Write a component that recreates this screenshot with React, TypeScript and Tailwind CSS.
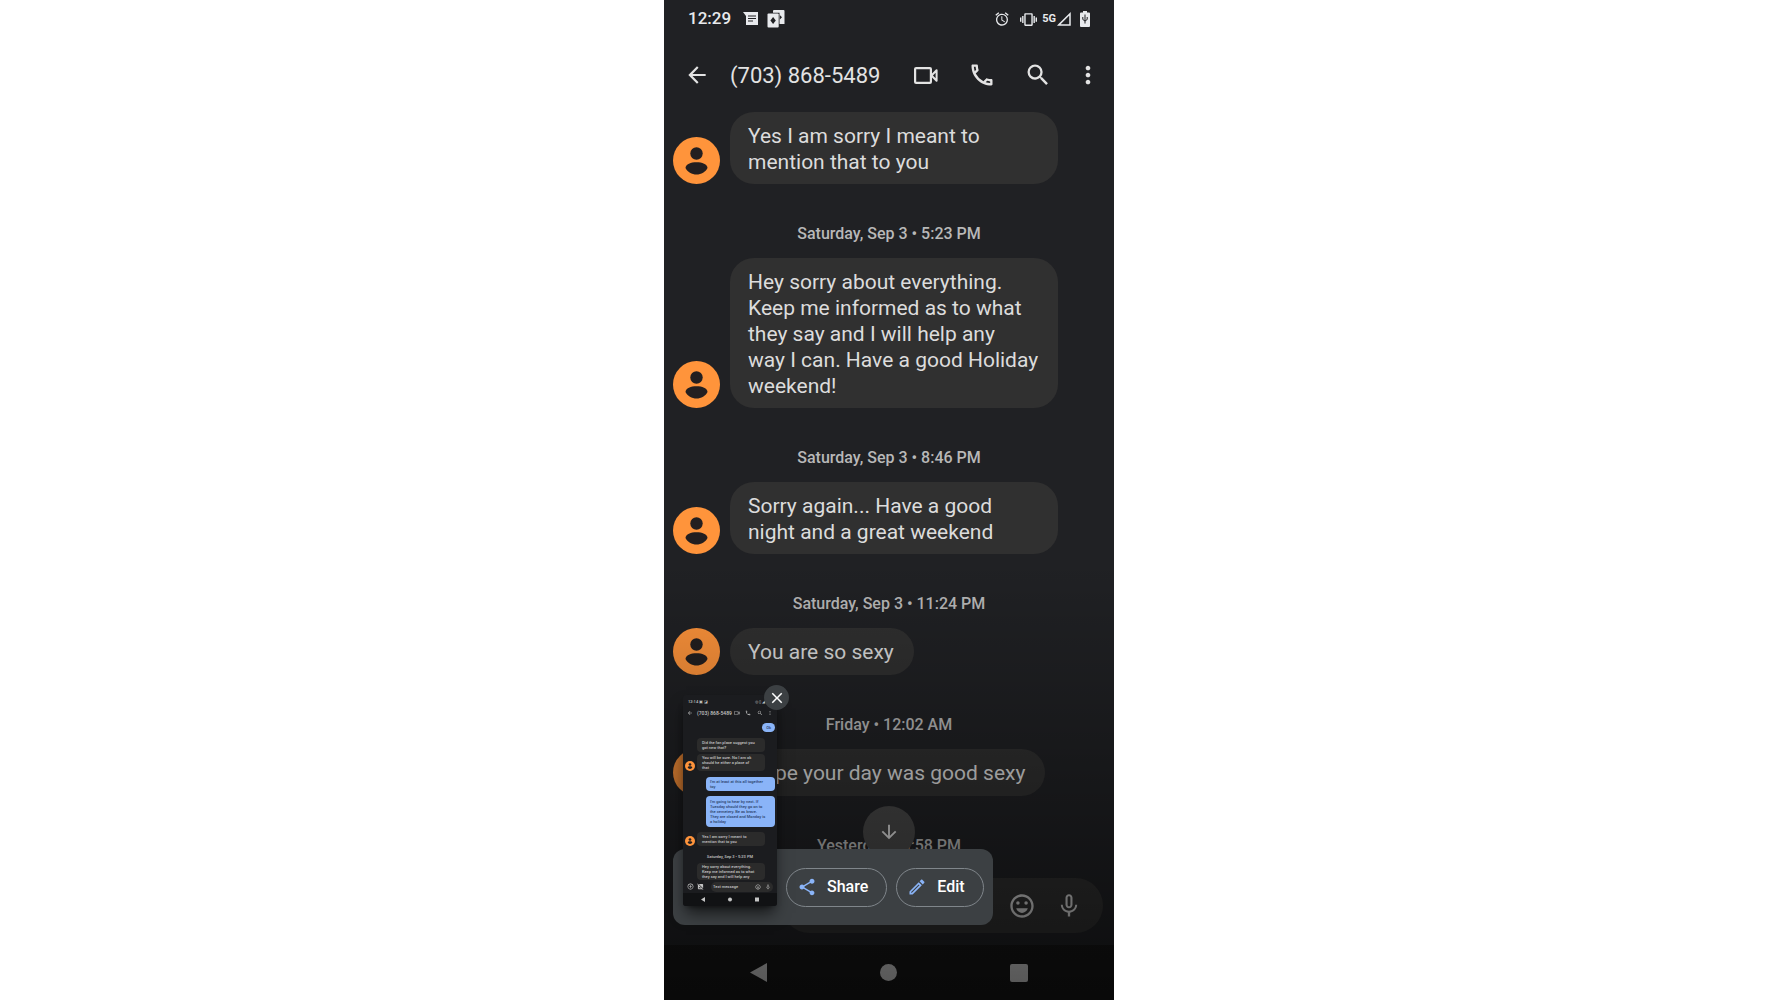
import type { ReactNode } from "react";
import {
  MdAlarm,
  MdArrowBack,
  MdArrowDownward,
  MdClose,
  MdImageNotSupported,
  MdMicNone,
  MdMoreVert,
  MdOutlineAddCircleOutline,
  MdOutlineCall,
  MdOutlineEdit,
  MdOutlineEmojiEmotions,
  MdSearch,
  MdShare,
  MdVibration,
} from "react-icons/md";

const messages = [
  { text: "Yes I am sorry I meant to\nmention that to you", time: "Saturday, Sep 3 • 5:23 PM", wide: true },
  {
    text: "Hey sorry about everything.\nKeep me informed as to what\nthey say and I will help any\nway I can. Have a good Holiday\nweekend!",
    time: "Saturday, Sep 3 • 8:46 PM",
    wide: true,
  },
  { text: "Sorry again... Have a good\nnight and a great weekend", time: "Saturday, Sep 3 • 11:24 PM", wide: true },
  { text: "You are so sexy", time: "Friday • 12:02 AM", wide: false },
  { text: "Hope your day was good sexy", time: "Yesterday • 6:58 PM", wide: false },
];

function VideoIcon({ className }: { className?: string }) {
  return (
    <svg viewBox="0 0 24 17" className={className} fill="none" stroke="currentColor" strokeWidth="2.2">
      <rect x="1.100" y="1.100" width="15.800" height="14.800" rx="1" />
      <path d="M17.500 8.500 22.600 3.200v10.600z" strokeWidth="2" strokeLinejoin="round" />
    </svg>
  );
}

function Avatar({ className }: { className: string }) {
  return (
    <svg viewBox="0 0 47 47" className={className} aria-hidden="true">
      <circle cx="23.5" cy="23.5" r="23.5" fill="#ff943b" />
      <circle cx="23.5" cy="16.5" r="6.200" fill="#231f20" />
      <path d="M12.500 31c0-3.800 5.500-5.800 11-5.800s11 2 11 5.800c-2 4-6.200 6.500-11 6.500s-9-2.500-11-6.500z" fill="#231f20" />
    </svg>
  );
}

function IconButton({ label, children }: { label: string; children: ReactNode }) {
  return (
    <button aria-label={label} className="flex items-center justify-center">
      {children}
    </button>
  );
}

function StatusBar() {
  return (
    <div className="flex h-[38px] items-center pr-6 pl-6 text-[#e8eaed]">
      <span className="font-[Roboto] text-[17px] font-medium">12:29</span>
      <svg viewBox="0 0 16 14" className="ml-3 h-[14px] w-4" fill="currentColor">
        <path d="M0 0h15v13H3V4z" />
        <path d="M5 4h8M5 6.500h8M5 9h5" stroke="#202124" strokeWidth="1.200" />
      </svg>
      <svg viewBox="0 0 18 18" className="ml-[8px] size-[18px]" fill="currentColor">
        <path d="M7 0h9.500a1 1 0 0 1 1 1v13h-5V2.800H6V1a1 1 0 0 1 1-1z" />
        <rect x="0.500" y="3.500" width="11.200" height="14" rx="1" />
        <path d="M6.100 7 8.800 10.500 6.100 14 3.400 10.500z" fill="#202124" />
        <path d="M12.800 5l2.200 2.300-2.200 2.300z" fill="#202124" />
      </svg>
      <MdAlarm className="ml-auto size-4" />
      <MdVibration className="ml-[10px] size-[17px]" />
      <span className="ml-[5px] font-[Roboto] text-[11px] font-bold">5G</span>
      <svg viewBox="0 0 14 14" className="ml-px size-[14px]" fill="none" stroke="currentColor" strokeWidth="1.500">
        <path d="M1.800 12.900 13 1.800v11.100z" />
      </svg>
      <svg viewBox="0 0 10 16" className="ml-[9px] h-4 w-[10px]" fill="currentColor">
        <path d="M3 0h4v1.500h2a1 1 0 0 1 1 1V15a1 1 0 0 1-1 1H1a1 1 0 0 1-1-1V2.500a1 1 0 0 1 1-1h2z" />
        <path d="M5 3.500v9M2.800 6v2.500L5 10l2.200-1.500V6" stroke="#202124" strokeWidth="1" fill="none" />
      </svg>
    </div>
  );
}

function Header() {
  return (
    <header className="flex h-[74px] items-center pr-3 pl-5 text-[#e3e3e3]">
      <IconButton label="Back">
        <MdArrowBack className="size-[26px]" />
      </IconButton>
      <h1 className="ml-5 text-[22px]">(703) 868-5489</h1>
      <div className="ml-auto flex items-center">
        <IconButton label="Video call">
          <VideoIcon className="h-[17px] w-6" />
        </IconButton>
        <span className="w-[30px]" />
        <IconButton label="Call">
          <MdOutlineCall className="size-7" />
        </IconButton>
        <span className="w-7" />
        <IconButton label="Search">
          <MdSearch className="size-7" />
        </IconButton>
        <span className="w-[22px]" />
        <IconButton label="More options">
          <MdMoreVert className="size-7" />
        </IconButton>
      </div>
    </header>
  );
}

function Message({ text, wide }: { text: string; wide: boolean }) {
  return (
    <div className="flex items-end gap-[10px] pr-14 pl-[9px]">
      <Avatar className="size-[47px] shrink-0" />
      <p
        className={
          "min-h-[47px] rounded-3xl bg-[#303030] pt-[11px] pb-[9px] pl-[18px] text-[21px] leading-[26px] whitespace-pre-line text-[#dcdcdc] " +
          (wide ? "flex-1" : "pr-5")
        }
      >
        {text}
      </p>
    </div>
  );
}

function Thumbnail() {
  const received = "w-[68px] rounded-[4px] bg-[#2b2b2b] px-[5px] whitespace-pre text-[#c4c4c4]";
  const sent = "w-[69px] self-end rounded-[4px] bg-[#8ab4f8] px-1 whitespace-pre text-[#2b426b]";
  return (
    <div className="flex w-[94px] flex-col overflow-hidden rounded-[3px] bg-[#1b1c1f] text-[4px] leading-[5px] text-[#c4c4c4] shadow-lg shadow-black/60">
      <div className="flex items-center pt-1 pr-3 pl-[5px]">
        <span>12:14 ▣ ◪</span>
        <span className="ml-auto">◎ ▯ ◢</span>
      </div>
      <div className="mt-[6px] flex h-[6px] items-center px-1">
        <MdArrowBack className="size-[6px]" />
        <span className="ml-1 text-[5px]">(703) 868-5489</span>
        <VideoIcon className="ml-auto h-1 w-[6px]" />
        <MdOutlineCall className="ml-[5px] size-[6px]" />
        <MdSearch className="ml-[6px] size-[6px]" />
        <MdMoreVert className="ml-1 size-[6px]" />
      </div>
      <div className="flex flex-col pr-[2px] pl-[2px]">
        <p className="mt-[7px] self-end rounded-full bg-[#8ab4f8] px-1 py-[2px] text-[#2b426b]">Ok</p>
        <div className="mt-[6px] pl-3">
          <p className={received + " py-[2px]"}>{"Did the fan place suggest you\ngot new that?"}</p>
        </div>
        <div className="mt-[2px] flex items-end gap-[2px]">
          <Avatar className="size-[10px]" />
          <p className={received + " py-px"}>{"You will be sure. No I am ok\nshould he either a place of\nthat"}</p>
        </div>
        <p className={sent + " mt-[6px] py-[2px]"}>{"I'm at least at this all together\ntoy"}</p>
        <p className={sent + " mt-[5px] py-[3px]"}>
          {"I'm going to hear by next. If\nTuesday should they go on to\nthe cemetery. Be as brave.\nThey are closed and Monday is\na holiday"}
        </p>
        <div className="mt-[5px] flex items-end gap-[2px]">
          <Avatar className="size-[10px]" />
          <p className={received + " py-[2px]"}>{"Yes I am sorry I meant to\nmention that to you"}</p>
        </div>
        <p className="mt-2 text-center">Saturday, Sep 3 • 5:23 PM</p>
        <div className="mt-1 pl-3">
          <p className={received + " py-px"}>{"Hey sorry about everything.\nKeep me informed as to what\nthey say and I will help any"}</p>
        </div>
      </div>
      <div className="flex h-[13px] items-center gap-[3px] px-1">
        <MdOutlineAddCircleOutline className="size-[7px]" />
        <MdImageNotSupported className="size-[7px]" />
        <div className="ml-1 flex flex-1 items-center rounded-full bg-[#2b2b2b] p-[2px]">
          <span>Text message</span>
          <MdOutlineEmojiEmotions className="ml-auto size-[6px]" />
          <MdMicNone className="ml-1 size-[6px]" />
        </div>
      </div>
      <svg viewBox="0 0 94 13" className="h-[13px] w-full bg-[#111214]" fill="currentColor">
        <path d="M22 4v5l-4-2.500z" />
        <circle cx="47" cy="6.500" r="2" />
        <rect x="72" y="4.500" width="4" height="4" />
      </svg>
    </div>
  );
}

export default function App() {
  return (
    <main className="h-screen bg-white">
      <div className="relative mx-auto flex h-full w-full max-w-[450px] flex-col overflow-hidden bg-[#202124] font-[Roboto,sans-serif]">
        <StatusBar />
        <Header />

        <section className="min-h-0 flex-1 overflow-hidden">
          {messages.map((m) => (
            <div key={m.time}>
              <Message text={m.text} wide={m.wide} />
              <p className="mt-10 mb-[14px] text-center text-[16px] leading-5 font-medium text-[#b8b8b8]">{m.time}</p>
            </div>
          ))}
        </section>

        <div className="flex shrink-0 pt-2 pr-[11px] pb-3 pl-[118px]">
          <div className="flex h-[55px] flex-1 items-center justify-end gap-[19px] rounded-full bg-[#303030] pr-5 text-[#d0d0d0]">
            <IconButton label="Emoji">
              <MdOutlineEmojiEmotions className="size-7" />
            </IconButton>
            <IconButton label="Voice message">
              <MdMicNone className="size-7" />
            </IconButton>
          </div>
        </div>

        <nav className="flex h-[55px] shrink-0 items-center justify-around bg-[#161616] px-[30px] text-[#d0d0d0]">
          <IconButton label="Navigate back">
            <svg viewBox="0 0 17 19" className="h-[19px] w-[17px]" fill="currentColor">
              <path d="M17 0v19L0 9.500z" />
            </svg>
          </IconButton>
          <IconButton label="Home">
            <span className="size-[17px] rounded-full bg-current" />
          </IconButton>
          <IconButton label="Recent apps">
            <span className="size-[18px] rounded-[2px] bg-current" />
          </IconButton>
        </nav>

        <button
          aria-label="Scroll to latest"
          className="absolute bottom-[142px] left-1/2 flex size-[52px] -translate-x-1/2 items-center justify-center rounded-full bg-[#484848] text-[#e3e3e3]"
        >
          <MdArrowDownward className="size-[22px]" />
        </button>

        {/* bottom scrim behind the screenshot toast */}
        <div className="pointer-events-none absolute inset-x-0 bottom-0 h-[440px] bg-linear-to-b from-transparent to-black/60" />

        <div className="absolute bottom-[75px] left-[9px] flex h-[76px] items-center gap-[9px] rounded-xl bg-[#3c4043] pr-[9px] pl-[113px] font-[Roboto] text-[16px] font-medium text-white">
          <div className="absolute bottom-[19px] left-[10px]">
            <Thumbnail />
            <button
              aria-label="Dismiss screenshot"
              className="absolute -top-[10px] -right-3 flex size-[25px] items-center justify-center rounded-full bg-[#3c4043]"
            >
              <MdClose className="size-[18px]" />
            </button>
          </div>
          <button className="flex h-[39px] items-center gap-[10px] rounded-full border border-[#80868b] pr-[18px] pl-[10px]">
            <MdShare className="size-5 text-[#8ab4f8]" />
            Share
          </button>
          <button className="flex h-[39px] items-center gap-[10px] rounded-full border border-[#80868b] pr-[18px] pl-[10px]">
            <MdOutlineEdit className="size-5 text-[#8ab4f8]" />
            Edit
          </button>
        </div>
      </div>
    </main>
  );
}
